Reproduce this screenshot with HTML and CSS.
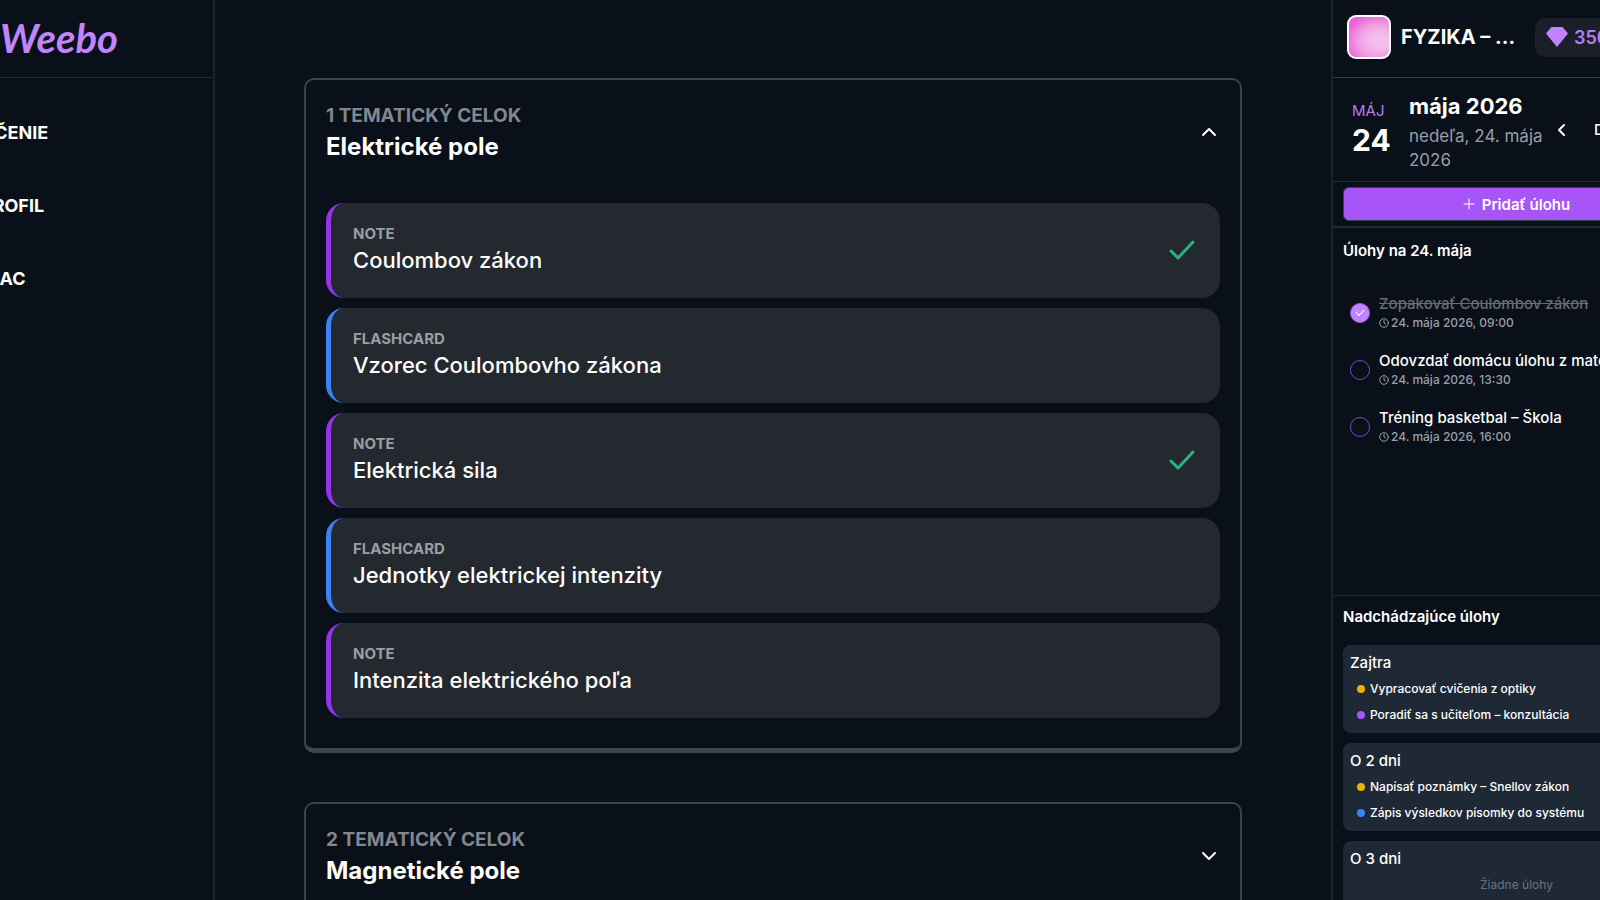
FILE: index.html
```html
<!DOCTYPE html>
<html lang="sk">
<head>
    <meta charset="UTF-8">
    <title>Weebo</title>
    <link rel="stylesheet" href="styles.css">
</head>
<body>
<div id="app">
    <aside id="sidebar">
        <a class="logo" href="#">Weebo</a>
        <nav>
            <a href="#">UČENIE</a>
            <a href="#">PROFIL</a>
            <a href="#">VIAC</a>
        </nav>
    </aside>

    <main id="content">
        <section class="unit">
            <button class="unit-head" type="button">
                <span>
                    <span class="unit-no">1 TEMATICKÝ CELOK</span>
                    <span class="unit-name">Elektrické pole</span>
                </span>
                <svg class="arrow" viewBox="0 0 22 22"><path d="M5 14l6-6 6 6"/></svg>
            </button>
            <ul class="lessons">
                <li class="note">
                    <a href="#"><span class="kind">NOTE</span><span class="name">Coulombov zákon</span></a>
                    <svg class="done" viewBox="0 0 32 32"><path d="M5 17l7 7L27 8"/></svg>
                </li>
                <li class="flashcard">
                    <a href="#"><span class="kind">FLASHCARD</span><span class="name">Vzorec Coulombovho zákona</span></a>
                </li>
                <li class="note">
                    <a href="#"><span class="kind">NOTE</span><span class="name">Elektrická sila</span></a>
                    <svg class="done" viewBox="0 0 32 32"><path d="M5 17l7 7L27 8"/></svg>
                </li>
                <li class="flashcard">
                    <a href="#"><span class="kind">FLASHCARD</span><span class="name">Jednotky elektrickej intenzity</span></a>
                </li>
                <li class="note">
                    <a href="#"><span class="kind">NOTE</span><span class="name">Intenzita elektrického poľa</span></a>
                </li>
            </ul>
        </section>

        <section class="unit">
            <button class="unit-head" type="button">
                <span>
                    <span class="unit-no">2 TEMATICKÝ CELOK</span>
                    <span class="unit-name">Magnetické pole</span>
                </span>
                <svg class="arrow" viewBox="0 0 22 22"><path d="M5 8l6 6 6-6"/></svg>
            </button>
        </section>
    </main>

    <aside id="panel">
        <header class="subject">
            <span class="avatar"></span>
            <h1>FYZIKA – ...</h1>
            <span class="gems">
                <svg viewBox="0 0 22 20"><path d="M5.500 0h11L22 6.500 11 20 0 6.500z"/></svg>
                350
            </span>
        </header>

        <div class="date">
            <div class="day"><span>MÁJ</span><b>24</b></div>
            <div class="month">
                <h2>mája 2026</h2>
                <p>nedeľa, 24. mája 2026</p>
            </div>
            <button class="prev" type="button" aria-label="Predošlý deň">
                <svg viewBox="0 0 16 16"><path d="M11 3 6 8l5 5"/></svg>
            </button>
            <button class="today" type="button">Dnes</button>
        </div>

        <div class="add">
            <button type="button">
                <svg viewBox="0 0 12 12"><path d="M6 1v10M1 6h10"/></svg>
                Pridať úlohu
            </button>
        </div>

        <section class="tasks">
            <h3>Úlohy na 24. mája</h3>
            <ul>
                <li>
                    <input type="checkbox" id="t1" checked>
                    <label for="t1"><span>Zopakovať Coulombov zákon</span>
                        <small><svg viewBox="0 0 10 10"><circle cx="5" cy="5" r="4.300"/><path d="M5 2.500V5l1.500 1"/></svg>24. mája 2026, 09:00</small>
                    </label>
                </li>
                <li>
                    <input type="checkbox" id="t2">
                    <label for="t2"><span>Odovzdať domácu úlohu z matematiky</span>
                        <small><svg viewBox="0 0 10 10"><circle cx="5" cy="5" r="4.300"/><path d="M5 2.500V5l1.500 1"/></svg>24. mája 2026, 13:30</small>
                    </label>
                </li>
                <li>
                    <input type="checkbox" id="t3">
                    <label for="t3"><span>Tréning basketbal – Škola</span>
                        <small><svg viewBox="0 0 10 10"><circle cx="5" cy="5" r="4.300"/><path d="M5 2.500V5l1.500 1"/></svg>24. mája 2026, 16:00</small>
                    </label>
                </li>
            </ul>
        </section>

        <section class="upcoming">
            <h3>Nadchádzajúce úlohy</h3>
            <div class="box">
                <h4>Zajtra</h4>
                <ul>
                    <li class="yellow">Vypracovať cvičenia z optiky</li>
                    <li class="purple">Poradiť sa s učiteľom – konzultácia</li>
                </ul>
            </div>
            <div class="box">
                <h4>O 2 dni</h4>
                <ul>
                    <li class="yellow">Napísať poznámky – Snellov zákon</li>
                    <li class="blue">Zápis výsledkov písomky do systému</li>
                </ul>
            </div>
            <div class="box">
                <h4>O 3 dni</h4>
                <p>Žiadne úlohy</p>
            </div>
        </section>
    </aside>
</div>
</body>
</html>
```
FILE: styles.css
```css
*{
    margin: 0;
    padding: 0;
    box-sizing: border-box;
}
html,body{
    height: 100%;
    overflow: hidden;
}
body{
    background: #0a1019;
    color: #fff;
    font-family: Inter, "Liberation Sans", sans-serif;
}
ul{
    list-style: none;
}
a{
    color: inherit;
    text-decoration: none;
}
button{
    background: none;
    border: 0;
    color: inherit;
    font: inherit;
    cursor: pointer;
}
svg{
    fill: none;
    stroke: currentColor;
    stroke-linecap: round;
    stroke-linejoin: round;
    flex: none;
}
/* the side columns run past both edges of the window */
#app{
    display: grid;
    grid-template-columns: 257px 1fr 369px;
    height: 100%;
    margin: 0 -100px 0 -42px;
}

/* left menu */
#sidebar{
    border-right: 2px solid #1c222c;
}
.logo{
    display: block;
    height: 78px;
    padding-left: 42px;
    border-bottom: 1px solid #252b35;
    color: #c084fc;
    font: italic 700 40px/76px Lato, sans-serif;
}
#sidebar nav{
    display: grid;
    gap: 25px;
    padding: 31px 23px;
}
#sidebar nav a{
    font-size: 18px;
    font-weight: 700;
    line-height: 48px;
}

/* lessons */
#content{
    padding: 78px 89px 0;
    overflow: hidden;
}
.unit{
    border: 2px solid #3b444d;
    border-bottom: 5px solid #3a474f;
    border-radius: 10px;
    padding: 20px 20px 30px;
    margin-bottom: 49px;
}
.unit-head{
    display: flex;
    justify-content: space-between;
    align-items: center;
    width: 100%;
    height: 63px;
    text-align: left;
}
.unit-head span{
    display: block;
}
.unit-no{
    color: #83868f;
    font-size: 19px;
    font-weight: 700;
    line-height: 31px;
}
.unit-name{
    font-size: 24px;
    font-weight: 700;
    line-height: 32px;
}
.arrow{
    width: 22px;
    height: 22px;
    stroke-width: 2;
}
.lessons{
    display: grid;
    gap: 10px;
    margin-top: 40px;
}
.lessons li{
    display: flex;
    align-items: center;
    justify-content: space-between;
    height: 95px;
    padding: 0 22px 2px;
    border-left: 5px solid;
    border-radius: 18px;
    background: #242930;
}
.lessons .note{
    border-color: #9333ea;
}
.lessons .flashcard{
    border-color: #3b82f6;
}
.lessons a{
    padding-bottom: 2px;
}
.lessons a span{
    display: block;
}
.kind{
    color: #9b9da2;
    font-size: 15px;
    font-weight: 700;
    line-height: 22px;
}
.name{
    font-size: 22px;
    font-weight: 500;
    line-height: 30px;
}
.done{
    width: 32px;
    height: 32px;
    color: #27b485;
    stroke-width: 3;
}

/* right panel */
#panel{
    display: flex;
    flex-direction: column;
    overflow: hidden;
    border-left: 2px solid #1c222c;
}
.subject{
    display: flex;
    align-items: center;
    flex: none;
    height: 78px;
    padding: 0 14px 3px;
    border-bottom: 1px solid #3a404a;
}
.avatar{
    flex: none;
    width: 44px;
    height: 44px;
    border: 2px solid #fff;
    border-radius: 9px;
    background: radial-gradient(ellipse at 75% 60%, #f3bdec 20%, #f09ce3 50%, transparent 80%), #ec62d8;
}
.subject h1{
    width: 144px;
    padding-left: 10px;
    font-size: 20px;
    font-weight: 700;
    white-space: nowrap;
}
.gems{
    display: flex;
    align-items: center;
    gap: 6px;
    height: 39px;
    padding: 0 11px;
    border-radius: 10px;
    background: #1b1f29;
    color: #b67cf2;
    font-size: 18px;
    font-weight: 600;
}
.gems svg{
    width: 22px;
    height: 20px;
    fill: #c084fc;
    stroke: none;
}
.date{
    display: flex;
    align-items: center;
    flex: none;
    height: 104px;
    padding: 0 19px;
    border-bottom: 1px solid #252b35;
}
.day{
    width: 57px;
    padding-bottom: 4px;
}
.day span{
    display: block;
    color: #b67cf2;
    font-size: 15px;
    line-height: 24px;
}
.day b{
    font-size: 30px;
    line-height: 34px;
}
.month{
    flex: none;
    width: 144px;
    padding-top: 3px;
}
.month h2{
    margin-bottom: 3px;
    font-size: 22px;
    font-weight: 700;
    line-height: 30px;
}
.month p{
    color: #9a9ea8;
    font-size: 17px;
    line-height: 24px;
}
.prev{
    display: flex;
    flex: none;
    width: 16px;
    margin-right: 25px;
}
.prev svg{
    width: 16px;
    height: 16px;
    stroke-width: 2;
}
.today{
    font-size: 15px;
    font-weight: 500;
}
.add{
    flex: none;
    padding: 5px 10px;
    border-bottom: 2px solid #252b35;
}
.add button{
    display: flex;
    align-items: center;
    justify-content: center;
    gap: 7px;
    width: 100%;
    height: 34px;
    border: 1px solid #374151;
    border-radius: 6px;
    background: #a855f7;
    font-size: 15px;
    font-weight: 600;
}
.add svg{
    width: 12px;
    height: 12px;
}
#panel h3{
    font-size: 15px;
    font-weight: 600;
    line-height: 25px;
}
.tasks{
    flex: none;
    min-height: 367px;
    padding: 10px;
}
.tasks ul{
    display: grid;
    gap: 18px;
    padding: 30px 7px;
}
.tasks li{
    display: flex;
    align-items: center;
    gap: 9px;
}
.tasks input{
    appearance: none;
    flex: none;
    width: 20px;
    height: 20px;
    border: 1px solid #7e45c4;
    border-radius: 50%;
    cursor: pointer;
}
.tasks input:checked{
    display: grid;
    place-items: center;
    border-color: #9c5be0;
    background: #c084fc;
}
.tasks input:checked::before{
    content: "";
    width: 7px;
    height: 4px;
    margin-bottom: 2px;
    border: solid #fff;
    border-width: 0 0 1px 1px;
    transform: rotate(-45deg);
}
.tasks label{
    font-size: 15px;
    font-weight: 500;
    line-height: 21px;
    white-space: nowrap;
}
.tasks input:checked + label span{
    color: #676b74;
    text-decoration: line-through;
}
.tasks small{
    display: flex;
    align-items: center;
    gap: 2px;
    color: #9a9ea8;
    font-size: 12px;
    font-weight: 500;
    line-height: 18px;
}
.tasks small svg{
    width: 10px;
    height: 10px;
}
.upcoming{
    flex: none;
    padding: 8px 10px;
    border-top: 1px solid #252b35;
}
.upcoming h3{
    margin-bottom: 16px;
}
.box{
    height: 88px;
    margin-bottom: 10px;
    padding: 5px 7px;
    border-radius: 8px;
    background: #1f2935;
}
.box h4{
    font-size: 15px;
    font-weight: 500;
    line-height: 26px;
}
.box li{
    display: flex;
    align-items: center;
    gap: 5px;
    padding-left: 7px;
    font-size: 12px;
    font-weight: 500;
    line-height: 26px;
    white-space: nowrap;
}
.box li::before{
    content: "";
    width: 8px;
    height: 8px;
    border-radius: 50%;
    background: #eab308;
}
.box .purple::before{
    background: #a855f7;
}
.box .blue::before{
    background: #3b82f6;
}
.box p{
    color: #6b7280;
    font-size: 12px;
    line-height: 26px;
    text-align: center;
}
```
